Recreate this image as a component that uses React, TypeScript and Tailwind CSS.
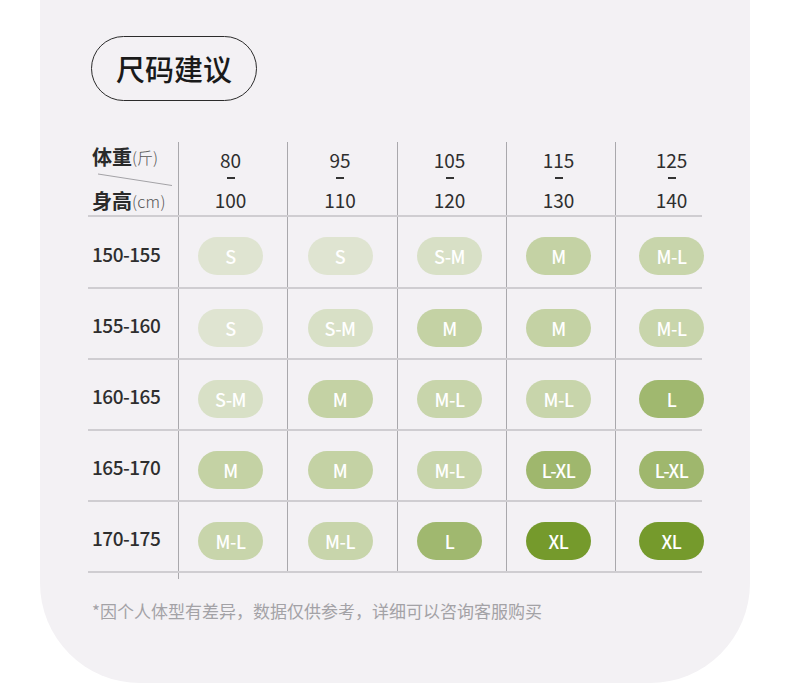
import React from "react";

type Size = "S" | "S-M" | "M" | "M-L" | "L" | "L-XL" | "XL";

const pillBg: Record<Size, string> = {
  S: "bg-[#dfe4d1]",
  "S-M": "bg-[#d8e0c6]",
  M: "bg-[#c4d2a4]",
  "M-L": "bg-[#c8d5ab]",
  L: "bg-[#a0b86f]",
  "L-XL": "bg-[#9fb76d]",
  XL: "bg-[#759a2c]",
};

const headers = [
  ["80", "100"],
  ["95", "110"],
  ["105", "120"],
  ["115", "130"],
  ["125", "140"],
];

const rows: { label: string; sizes: Size[]; h: string }[] = [
  { label: "150-155", sizes: ["S", "S", "S-M", "M", "M-L"], h: "h-[70px]" },
  { label: "155-160", sizes: ["S", "S-M", "M", "M", "M-L"], h: "h-[69px]" },
  { label: "160-165", sizes: ["S-M", "M", "M-L", "M-L", "L"], h: "h-[69px]" },
  { label: "165-170", sizes: ["M", "M", "M-L", "L-XL", "L-XL"], h: "h-[69px]" },
  { label: "170-175", sizes: ["M-L", "M-L", "L", "XL", "XL"], h: "h-[69px]" },
];

const colW = ["w-[109px]", "w-[110px]", "w-[109px]", "w-[109px]", "w-[87px]"];

function Pill({ size }: { size: Size }) {
  return (
    <div
      className={`w-[65px] h-[38px] rounded-full ${pillBg[size]} flex items-center justify-center text-white text-[18px] font-medium tracking-[-0.5px]`}
    >
      {size}
    </div>
  );
}

function Divider() {
  return <div className="w-[614px] h-[2px] bg-[#cfcdd1]" />;
}

export default function App() {
  return (
    <div
      className="min-h-[688px] bg-white"
      style={{ fontFamily: '"Noto Sans CJK SC", "Noto Sans", sans-serif' }}
    >
      <div className="ml-[40px] w-[710px] h-[683px] bg-[#f3f1f4] rounded-b-[100px] pt-[36px] pl-[51px]">
        <div className="w-[166px] h-[65px] rounded-full border-[1.5px] border-[#2b2b2b] flex items-center justify-center text-[29px] font-medium text-[#1a1a1a] leading-none">
          尺码建议
        </div>

        <div className="mt-[41px] -ml-[3px]">
          {/* header */}
          <div className="flex h-[73px]">
            <div className="w-[90px] relative text-[#2a2a2a]">
              <div className="absolute left-[4px] top-[5px] flex items-end leading-[20px]">
                <span className="text-[20px] font-bold">体重</span>
                <span className="text-[16px] text-[#555] font-light">(斤)</span>
              </div>
              <svg
                className="absolute left-[10px] top-[31px]"
                width="76"
                height="14"
                viewBox="0 0 76 14"
              >
                <line x1="0" y1="1" x2="74" y2="12.5" stroke="#a3a2a6" strokeWidth="1" />
              </svg>
              <div className="absolute left-[4px] top-[49px] flex items-end leading-[20px]">
                <span className="text-[20px] font-bold">身高</span>
                <span className="text-[16px] text-[#555] font-light tracking-[0.3px]">(cm)</span>
              </div>
            </div>
            {headers.map(([a, b], i) => (
              <div
                key={i}
                className={`${colW[i]} border-l border-[#a9a8ac] flex flex-col pt-[8px] text-[19px] text-[#2e2e2e] ${i === 4 ? "items-start" : "items-center pr-[5px]"}`}
              >
                <div className={`${i === 4 ? "w-[111px] shrink-0" : "w-full"} flex flex-col items-center`}>
                  <div className="leading-[20px] h-[20px]">{a}</div>
                  <div className="mt-[7px] w-[8px] h-[2px] bg-[#333]" aria-label="-" />
                  <div className="mt-[11px] leading-[20px] h-[20px]">{b}</div>
                </div>
              </div>
            ))}
          </div>
          <Divider />

          {rows.map((r) => (
            <div key={r.label}>
              <div className={`flex ${r.h}`}>
                <div className="w-[90px] flex items-center pl-[4px] pt-[4px] text-[19px] font-medium text-[#2e2e2e] tracking-[-0.5px]">
                  {r.label}
                </div>
                {r.sizes.map((s, i) => (
                  <div
                    key={i}
                    className={`${colW[i]} border-l border-[#a9a8ac] pt-[20px] flex ${i === 4 ? "justify-start" : "justify-center pr-[5px]"}`}
                  >
                    {i === 4 ? (
                      <div className="w-[111px] shrink-0 flex justify-center">
                        <Pill size={s} />
                      </div>
                    ) : (
                      <Pill size={s} />
                    )}
                  </div>
                ))}
              </div>
              <Divider />
            </div>
          ))}
          <div className="ml-[90px] h-[6px] border-l border-[#a9a8ac]" />
        </div>

        <div className="mt-[22px] -ml-[3px] pl-[4px] text-[17px] leading-[20px] text-[#a3a2a6]">
          *因个人体型有差异，数据仅供参考，详细可以咨询客服购买
        </div>
      </div>
    </div>
  );
}
